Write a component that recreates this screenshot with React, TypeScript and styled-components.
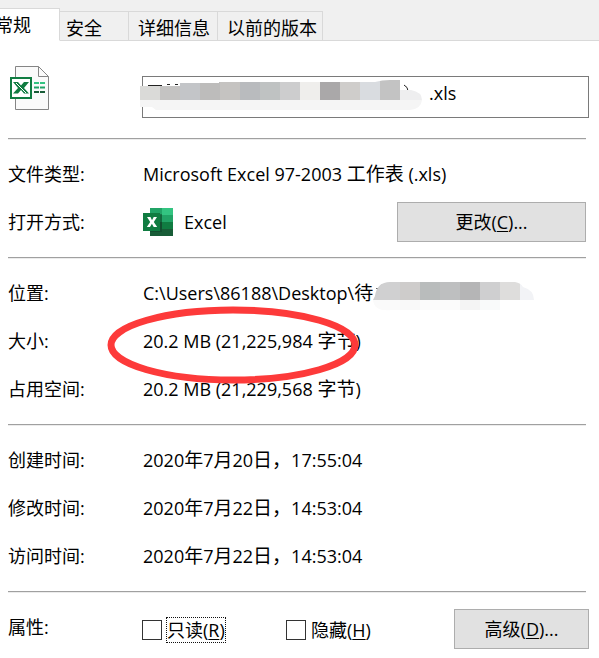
import React from "react";
import styled, { createGlobalStyle } from "styled-components";

const GlobalStyle = createGlobalStyle`
  *, *::before, *::after { box-sizing: border-box; }
  body {
    margin: 0;
    background: #fff;
    color: #000;
    overflow-x: hidden;
  }
  body, button, input {
    font-family: "Open Sans", "Noto Sans CJK SC", sans-serif;
    font-size: 18px;
    line-height: 24px;
  }
`;

const Sheet = styled.main`
  overflow: hidden;
`;

const TabStrip = styled.div`
  display: flex;
  align-items: flex-end;
  height: 41px;
  background: #f0f0f0;
  box-shadow: inset 0 -1px #d9d9d9;
`;

const Tab = styled.button<{ $width: number; $indent?: number; $active?: boolean }>`
  width: ${(p) => p.$width}px;
  height: ${(p) => (p.$active ? 33 : 30)}px;
  padding: ${(p) => (p.$active ? 0 : 4)}px 0 0 ${(p) => p.$indent ?? 0}px;
  border: 1px solid #d9d9d9;
  border-left: 0;
  border-bottom-color: ${(p) => (p.$active ? "#fff" : "#d9d9d9")};
  background: ${(p) => (p.$active ? "#fff" : "#f0f0f0")};
  color: inherit;
  text-align: left;
  white-space: nowrap;
`;

const ClippedLabel = styled.span`
  display: block;
  margin-left: -5px;
`;

const Section = styled.section`
  margin: 0 13px 0 8px;
  padding: 11px 0;
  border-bottom: 1px solid #a0a0a0;
  box-shadow: 0 1px #ececec;
`;

const HeaderSection = styled(Section)`
  display: grid;
  grid-template-columns: 134px 1fr;
  align-items: start;
  padding: 24px 0 20px;
`;

const FooterSection = styled(Section)`
  display: grid;
  grid-template-columns: 134px 144px 1fr auto;
  align-items: center;
  margin-right: 10px;
  padding: 17px 0 8px;
  border-bottom: 0;
  box-shadow: none;
`;

const Row = styled.div`
  display: grid;
  grid-template-columns: 135px 1fr auto;
  align-items: center;
  height: 48px;
`;

const Label = styled.span`
  white-space: nowrap;
`;

const FooterLabel = styled(Label)`
  padding-bottom: 4px;
`;

const Value = styled.span`
  position: relative;
  display: flex;
  align-items: center;
  white-space: nowrap;
`;

const ValueText = styled.span`
  white-space: pre;
`;

const Han = styled.span`
  font-size: 19px;
`;

const AppName = styled.span`
  margin-left: 11px;
`;

const NameField = styled.div`
  position: relative;
  margin: 11px -3px 0 0;
`;

const NameInput = styled.input`
  display: block;
  width: 100%;
  height: 42px;
  padding: 0 4px 8px 286px;
  border: 1px solid #7a7a7a;
  border-radius: 0;
  background: #fff;
  color: inherit;
`;

const PushButton = styled.button<{ $width: number }>`
  width: ${(p) => p.$width}px;
  height: 40px;
  padding: 0;
  border: 1px solid #adadad;
  background: #e1e1e1;
  color: inherit;
`;

const Mnemonic = styled.span`
  text-decoration: underline;
  text-decoration-thickness: 1px;
  text-underline-offset: 2px;
`;

const CheckLabel = styled.label`
  display: flex;
  align-items: center;
  gap: 4px;
  padding-top: 2px;
  white-space: nowrap;
`;

const CheckBox = styled.input`
  appearance: none;
  width: 20px;
  height: 20px;
  margin: 0;
  border: 1px solid #333;
  background: #fff;
`;

const CheckText = styled.span<{ $focused?: boolean }>`
  border: 1px dotted ${(p) => (p.$focused ? "#111" : "transparent")};
`;

const Overlay = styled.svg<{ $left: number; $top: number }>`
  position: absolute;
  left: ${(p) => p.$left}px;
  top: ${(p) => p.$top}px;
  z-index: 1;
  pointer-events: none;
`;

const nameBlocks = ["#dadad8", "#c4c3c2", "#c3c5c8", "#bdbcbb", "#c5c3c1", "#b9bbbe", "#bfc2c2", "#cdcdce", "#efeeec", "#aaa8a9", "#cfcdcb", "#d9dce0", "#c3c3c3"];
const pathBlocks = ["#d0d0d1", "#cecccb", "#b9bcbc", "#bebfc0", "#b5b5b6", "#cfcfd0", "#dedddc", "#f2f3f6"];
const pathLowBlocks = ["#fafafa", "#f9f9f9", "#fbfbfb", "#fbfbfb", "#f4f4f4", "#f9fafa"];

function NameMosaic() {
  return (
    <Overlay $left={-2} $top={4} width="284" height="32" viewBox="0 0 284 32" aria-hidden="true">
      <defs>
        <clipPath id="name-brush">
          <path d="M0 6H40V3H79V2H235Q242 0 250 0H260Q268 0 270 4V10H271Q282 12 282 20Q281 29 270 30H16L12 27H0Z" />
        </clipPath>
      </defs>
      <path d="M8 5.500H22M27 4.500H30M35 4.500H38" stroke="#222" />
      <path d="M264 5Q268 7 268 11" fill="none" stroke="#222" />
      <g clipPath="url(#name-brush)">
        {nameBlocks.map((c, i) => (
          <rect key={i} x={i * 20} y="0" width="20" height="20" fill={c} />
        ))}
        <rect x="260" y="10" width="24" height="10" fill="#eeeeef" />
        <rect x="0" y="20" width="284" height="12" fill="#f5f5f5" />
      </g>
    </Overlay>
  );
}

function PathMosaic() {
  return (
    <Overlay $left={229} $top={1} width="164" height="30" viewBox="0 0 164 30" aria-hidden="true">
      <defs>
        <clipPath id="path-brush">
          <path d="M3 14Q5 0 18 0H143Q149 1 151 5Q162 8 162 18H128V28H20Q2 30 1 18Z" />
        </clipPath>
      </defs>
      <path d="M4 6.500H9" stroke="#666" />
      <g clipPath="url(#path-brush)">
        <rect width="10" height="18" fill="#cfcfd0" />
        {pathBlocks.map((c, i) => (
          <rect key={i} x={8 + i * 20} y="0" width="20" height="18" fill={c} />
        ))}
        <rect y="18" width="8" height="12" fill="#fafafa" />
        {pathLowBlocks.map((c, i) => (
          <rect key={i} x={8 + i * 20} y="18" width="20" height="12" fill={c} />
        ))}
      </g>
    </Overlay>
  );
}

function SpreadsheetFileIcon() {
  return (
    <svg width="42" height="46" viewBox="0 0 42 46" aria-hidden="true">
      <path d="M7.500 1.500H30.500L40.500 11.500V44.500H7.500Z" fill="#fafafa" stroke="#858585" />
      <path d="M30.500 1.500V11.500H40.500" fill="none" stroke="#858585" />
      <path d="M26 18h5M32 18h5" stroke="#33c481" strokeWidth="2" />
      <path d="M26 22.500h5M32 22.500h5" stroke="#21a366" strokeWidth="2" />
      <path d="M26 27h5M32 27h5" stroke="#185c37" strokeWidth="2" />
      <rect x="3" y="13" width="20" height="20" fill="#fff" stroke="#107c41" strokeWidth="2" />
      <path d="M5 17H10L13 20.500 16 17H21L16 23 21 28.500H16L13 25 10 28.500H5L10 23Z" fill="#107c41" />
      <path d="M8 18L18 28" stroke="#fff" />
    </svg>
  );
}

function ExcelIcon() {
  return (
    <svg width="30" height="28" viewBox="0 0 30 28" aria-hidden="true">
      <rect x="7" width="12" height="7" fill="#21a366" />
      <rect x="19" width="11" height="7" fill="#33c481" />
      <rect x="7" y="7" width="12" height="7" fill="#1a8a50" />
      <rect x="19" y="7" width="11" height="7" fill="#21a366" />
      <rect x="7" y="14" width="12" height="7" fill="#185c37" />
      <rect x="19" y="14" width="11" height="7" fill="#107c41" />
      <rect x="7" y="21" width="23" height="7" fill="#185c37" />
      <path d="M7 6H19V24H7Z" fill="#0b3f25" opacity=".45" />
      <rect y="5" width="17" height="18" fill="#107c41" />
      <path d="M4 9H7.500L9 12.200 10.700 9H14L10.800 14 14.200 19H10.700L8.900 15.700 7 19H3.800L7.200 14Z" fill="#fff" />
    </svg>
  );
}

function HighlightEllipse() {
  return (
    <Overlay $left={-37} $top={-23} width="254" height="80" viewBox="0 0 254 80" aria-hidden="true">
      <ellipse cx="127" cy="39" rx="122" ry="35" fill="none" stroke="#fd3a3a" strokeWidth="7" />
    </Overlay>
  );
}

type InfoProps = { label: string; text: string; children?: React.ReactNode };

function InfoRow({ label, text, children }: InfoProps) {
  const runs = text.split(/([\u3000-\u9fff\uff00-\uffef]+)/);
  return (
    <Row>
      <Label>{label}</Label>
      <Value>
        <ValueText>
          {runs.map((run, i) => (i % 2 ? <Han key={i}>{run}</Han> : run))}
        </ValueText>
        {children}
      </Value>
    </Row>
  );
}

export default function App() {
  return (
    <Sheet>
      <GlobalStyle />
      <TabStrip role="tablist">
        <Tab role="tab" aria-selected="true" $active $width={60}>
          <ClippedLabel>常规</ClippedLabel>
        </Tab>
        <Tab role="tab" aria-selected="false" $width={69} $indent={6}>安全</Tab>
        <Tab role="tab" aria-selected="false" $width={89} $indent={9}>详细信息</Tab>
        <Tab role="tab" aria-selected="false" $width={105} $indent={9}>以前的版本</Tab>
      </TabStrip>

      <HeaderSection>
        <SpreadsheetFileIcon />
        <NameField>
          <NameInput aria-label="文件名" defaultValue=".xls" />
          <NameMosaic />
        </NameField>
      </HeaderSection>

      <Section>
        <InfoRow label="文件类型:" text="Microsoft Excel 97-2003 工作表 (.xls)" />
        <Row>
          <Label>打开方式:</Label>
          <Value>
            <ExcelIcon />
            <AppName>Excel</AppName>
          </Value>
          <PushButton $width={189}>
            更改(<Mnemonic>C</Mnemonic>)...
          </PushButton>
        </Row>
      </Section>

      <Section>
        <InfoRow label="位置:" text="C:\Users\86188\Desktop\待">
          <PathMosaic />
        </InfoRow>
        <InfoRow label="大小:" text="20.2 MB (21,225,984 字节)">
          <HighlightEllipse />
        </InfoRow>
        <InfoRow label="占用空间:" text="20.2 MB (21,229,568 字节)" />
      </Section>

      <Section>
        <InfoRow label="创建时间:" text="2020年7月20日，17:55:04" />
        <InfoRow label="修改时间:" text="2020年7月22日，14:53:04" />
        <InfoRow label="访问时间:" text="2020年7月22日，14:53:04" />
      </Section>

      <FooterSection>
        <FooterLabel>属性:</FooterLabel>
        <CheckLabel>
          <CheckBox type="checkbox" />
          <CheckText $focused>
            只读(<Mnemonic>R</Mnemonic>)
          </CheckText>
        </CheckLabel>
        <CheckLabel>
          <CheckBox type="checkbox" />
          <CheckText>
            隐藏(<Mnemonic>H</Mnemonic>)
          </CheckText>
        </CheckLabel>
        <PushButton $width={135}>
          高级(<Mnemonic>D</Mnemonic>)...
        </PushButton>
      </FooterSection>
    </Sheet>
  );
}
